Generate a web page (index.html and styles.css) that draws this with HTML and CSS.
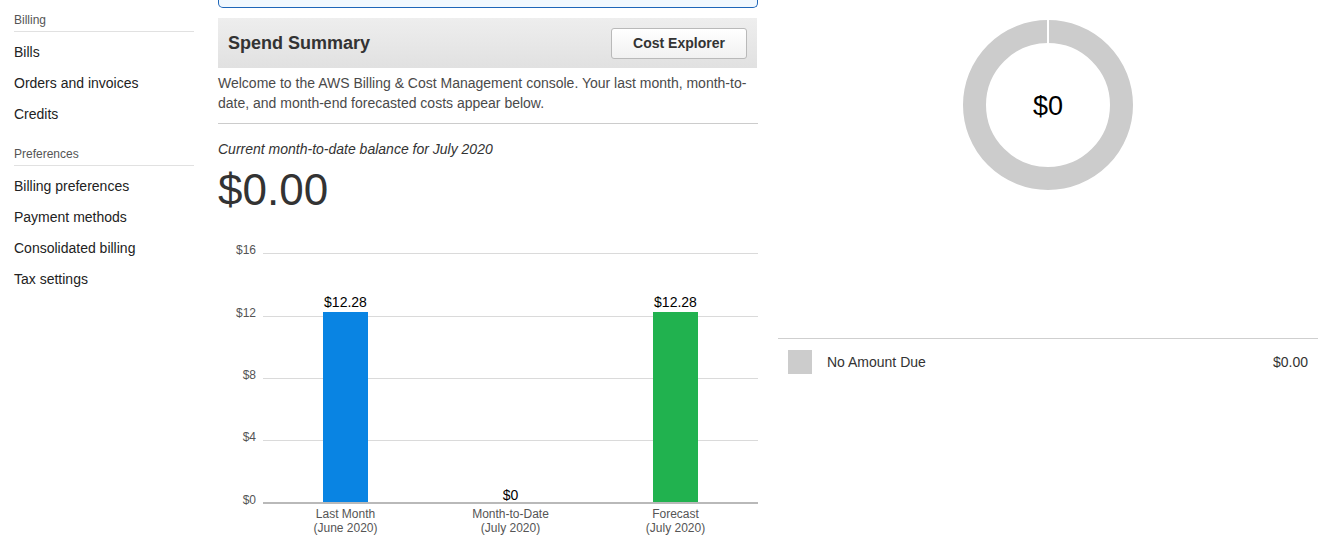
FILE: index.html
```html
<!DOCTYPE html>
<html lang="en">
<head>
<meta charset="utf-8">
<title>Billing Dashboard</title>
<link rel="stylesheet" href="styles.css">
</head>
<body>
<div class="page">
  <nav class="sidebar">
    <div class="nav-heading first">Billing</div>
    <ul class="nav-list">
      <li>Bills</li>
      <li>Orders and invoices</li>
      <li>Credits</li>
    </ul>
    <div class="nav-heading">Preferences</div>
    <ul class="nav-list">
      <li>Billing preferences</li>
      <li>Payment methods</li>
      <li>Consolidated billing</li>
      <li>Tax settings</li>
    </ul>
  </nav>

  <main class="main">
    <div class="info-box"></div>
    <div class="panel-header">
      <h2 class="panel-title">Spend Summary</h2>
      <button class="btn">Cost Explorer</button>
    </div>
    <p class="welcome">Welcome to the AWS Billing &amp; Cost Management console. Your last month, month-to-date, and month-end forecasted costs appear below.</p>
    <p class="balance-label">Current month-to-date balance for July 2020</p>
    <div class="balance">$0.00</div>
    <svg class="chart" width="540" height="305" viewBox="218 235 540 305">
      <g class="grid">
        <line x1="263" x2="758" y1="253.5" y2="253.5"/>
        <line x1="263" x2="758" y1="316.5" y2="316.5"/>
        <line x1="263" x2="758" y1="378.5" y2="378.5"/>
        <line x1="263" x2="758" y1="440.5" y2="440.5"/>
      </g>
      <g class="ylabels">
        <text x="256" y="254">$16</text>
        <text x="256" y="317">$12</text>
        <text x="256" y="379">$8</text>
        <text x="256" y="441">$4</text>
        <text x="256" y="504">$0</text>
      </g>
      <rect x="323" y="312" width="45" height="191" fill="#0984e3"/>
      <rect x="653" y="312" width="45" height="191" fill="#21b24f"/>
      <line class="axis" x1="263" x2="758" y1="503" y2="503"/>
      <g class="vlabels">
        <text x="345.5" y="307">$12.28</text>
        <text x="510.5" y="500">$0</text>
        <text x="675.5" y="307">$12.28</text>
      </g>
      <g class="xlabels">
        <text x="345.5" y="518">Last Month</text>
        <text x="345.5" y="532">(June 2020)</text>
        <text x="510.5" y="518">Month-to-Date</text>
        <text x="510.5" y="532">(July 2020)</text>
        <text x="675.5" y="518">Forecast</text>
        <text x="675.5" y="532">(July 2020)</text>
      </g>
    </svg>
  </main>

  <aside class="right">
    <div class="donut-wrap">
      <svg class="donut" width="170" height="170" viewBox="0 0 170 170">
        <circle cx="85" cy="85" r="73.5" fill="none" stroke="#cccccc" stroke-width="23"/>
        <line x1="85" x2="85" y1="0" y2="24" stroke="#ffffff" stroke-width="2"/>
        <text x="85" y="95" class="donut-text">$0</text>
      </svg>
    </div>
    <div class="legend-row">
      <span class="swatch"></span>
      <span class="legend-label">No Amount Due</span>
      <span class="legend-value">$0.00</span>
    </div>
  </aside>
</div>
</body>
</html>
```

FILE: styles.css
```css
* { box-sizing: border-box; }
html, body { margin: 0; padding: 0; background: #fff; }
body {
  font-family: "Liberation Sans", Arial, Helvetica, sans-serif;
  color: #333;
  font-size: 14px;
}
.page {
  display: flex;
  align-items: flex-start;
}

/* Sidebar */
.sidebar {
  width: 218px;
  flex: none;
  padding-left: 14px;
  padding-right: 24px;
}
.nav-heading {
  font-size: 12px;
  line-height: 14px;
  color: #555;
  padding-bottom: 4px;
  border-bottom: 1px solid #e1e1e1;
  margin-top: 17px;
}
.nav-heading.first { margin-top: 13px; }
.nav-list {
  list-style: none;
  margin: 5px 0 0;
  padding: 0;
}
.nav-list li {
  font-size: 14px;
  line-height: 31px;
  color: #222;
}

/* Main column */
.main {
  width: 540px;
  flex: none;
}
.info-box {
  height: 8px;
  border: 1px solid #1f66b8;
  border-top: 0;
  border-radius: 0 0 5px 5px;
  background: #f1f8fe;
}
.panel-header {
  margin-top: 10px;
  height: 50px;
  width: 539px;
  display: flex;
  align-items: center;
  justify-content: space-between;
  padding: 0 10px;
  background: linear-gradient(#eeeeee, #e1e1e1);
}
.panel-title {
  margin: 0;
  font-size: 18px;
  font-weight: bold;
  color: #333;
}
.btn {
  width: 136px;
  height: 31px;
  font-family: inherit;
  font-size: 14px;
  font-weight: bold;
  color: #333;
  border: 1px solid #b9b9b9;
  border-radius: 3px;
  background: linear-gradient(#ffffff, #f1f1f1);
  padding: 0;
}
.welcome {
  margin: 5px 0 0;
  font-size: 14px;
  line-height: 20px;
  color: #4a4a4a;
  padding-bottom: 10px;
  border-bottom: 1px solid #cccccc;
}
.balance-label {
  margin: 15px 0 0;
  font-size: 14px;
  line-height: 20px;
  font-style: italic;
  color: #333;
}
.balance {
  font-size: 44px;
  line-height: 50px;
  margin-top: 6px;
  color: #333;
}
.chart {
  display: block;
  margin-top: 20px;
  font-family: "Liberation Sans", Arial, sans-serif;
}
.grid line { stroke: #dadada; stroke-width: 1; }
.axis { stroke: #b9b9b9; stroke-width: 2; }
.ylabels text {
  font-size: 12px;
  fill: #555;
  text-anchor: end;
}
.vlabels text {
  font-size: 14px;
  fill: #000;
  text-anchor: middle;
}
.xlabels text {
  font-size: 12px;
  fill: #555;
  text-anchor: middle;
}

/* Right column */
.right {
  width: 540px;
  flex: none;
  margin-left: 20px;
}
.donut-wrap {
  height: 339px;
  display: flex;
  justify-content: center;
  padding-top: 20px;
  border-bottom: 1px solid #cfcfcf;
}
.donut { display: block; }
.donut-text {
  font-size: 27px;
  fill: #000;
  text-anchor: middle;
  font-family: "Liberation Sans", Arial, sans-serif;
}
.legend-row {
  display: flex;
  align-items: center;
  padding: 11px 10px 0 10px;
}
.swatch {
  width: 24px;
  height: 24px;
  background: #cccccc;
  flex: none;
}
.legend-label {
  margin-left: 15px;
  font-size: 14px;
  color: #333;
  flex: 1;
}
.legend-value {
  font-size: 14px;
  color: #333;
}
```
